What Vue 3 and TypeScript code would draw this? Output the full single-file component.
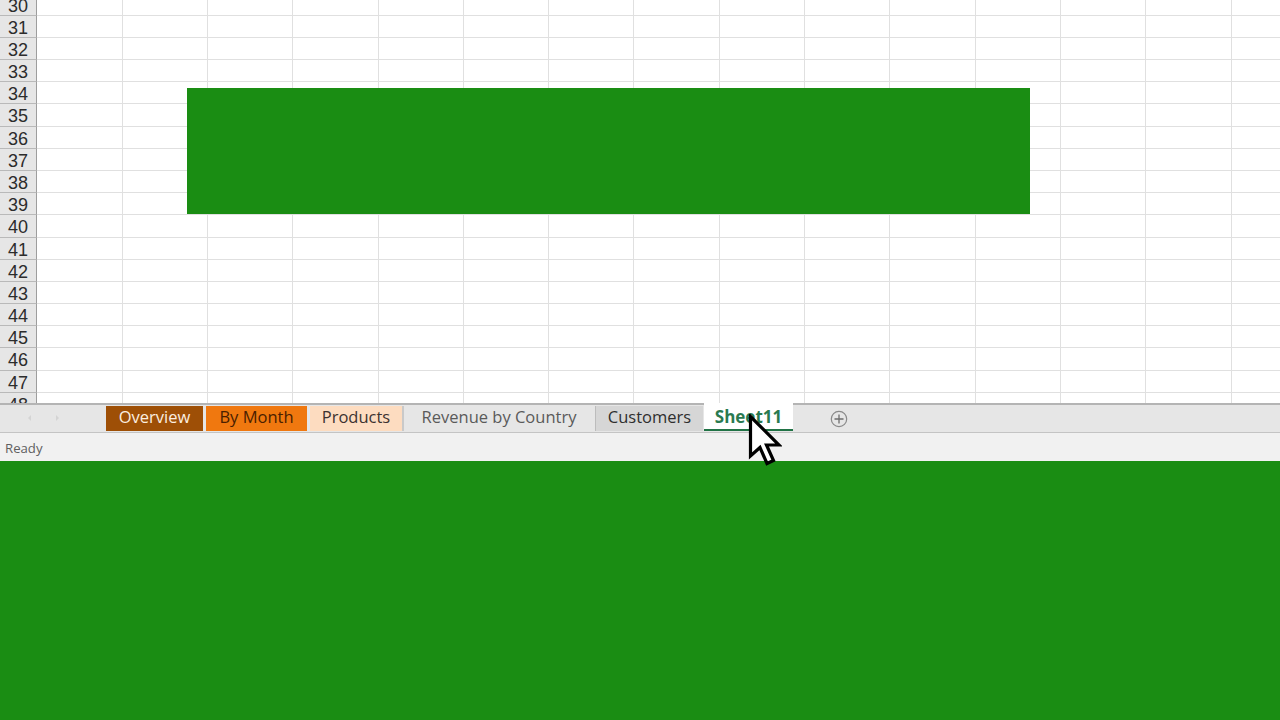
<script setup lang="ts">
const rows: number[] = Array.from({ length: 19 }, (_, i) => 30 + i)
const cols: number[] = Array.from({ length: 15 }, (_, i) => i)
interface Tab { name: string; kind: string }
const tabs: Tab[] = [
  { name: 'Overview', kind: 'brown' },
  { name: 'By Month', kind: 'orange' },
  { name: 'Products', kind: 'peach' },
  { name: 'Revenue by Country', kind: 'plain' },
  { name: 'Customers', kind: 'grey' },
  { name: 'Sheet11', kind: 'active' },
]
</script>

<template>
  <div class="page">
    <div class="sheet">
      <div class="rows">
        <div v-for="r in rows" :key="r" class="row">
          <div class="head">{{ r }}</div>
          <div v-for="c in cols" :key="c" class="cell"></div>
        </div>
      </div>
      <div class="block"></div>
    </div>
    <div class="tabbar">
      <div class="nav">
        <svg width="8" height="10" viewBox="0 0 8 10"><path d="M6 2 L3 5 L6 8Z" fill="#d4d4d4" /></svg>
        <svg width="8" height="10" viewBox="0 0 8 10"><path d="M2 2 L5 5 L2 8Z" fill="#d4d4d4" /></svg>
      </div>
      <div class="tabs">
        <div v-for="t in tabs" :key="t.name" class="tab" :class="t.kind">{{ t.name }}</div>
      </div>
      <svg class="plus" width="18" height="18" viewBox="0 0 18 18">
        <circle cx="9" cy="9" r="7.7" fill="none" stroke="#8a8a8a" stroke-width="1.2" />
        <path d="M9 4.5V13.5M4.5 9H13.5" stroke="#6e6e6e" stroke-width="1.3" />
      </svg>
    </div>
    <div class="status">Ready</div>
    <div class="footer"></div>
    <svg class="cursor" width="34" height="52" viewBox="0 0 34 52">
      <path d="M2.5 2.5 L2.5 42 L12 33.5 L19 49.5 L25.5 46.5 L18.5 31 L31 31 Z" fill="#fff" stroke="#000" stroke-width="3.2" stroke-linejoin="miter" />
    </svg>
  </div>
</template>

<style>
html, body { margin: 0; padding: 0; background: #fff; }
</style>

<style scoped>
.page {
  position: relative;
  width: 1280px;
  height: 720px;
  overflow: hidden;
  display: flex;
  flex-direction: column;
  background: #fff;
}
.sheet {
  position: relative;
  height: 403px;
  overflow: hidden;
  flex: none;
}
.rows {
  margin-top: -6.4px;
}
.row {
  display: flex;
  height: 22.18px;
  box-sizing: border-box;
  border-bottom: 1px solid #e0e0e0;
}
.head {
  flex: none;
  width: 37.2px;
  box-sizing: border-box;
  background: #e6e6e6;
  border-right: 1.5px solid #9d9d9d;
  text-align: center;
  font: 18px/24px "Liberation Sans", Arial, sans-serif;
  color: #2c2c2c;
  margin-bottom: -1px;
  border-bottom: 1px solid #b9b9b9;
}
.cell {
  flex: none;
  width: 85.33px;
  box-sizing: border-box;
  border-right: 1px solid #e0e0e0;
}
.block {
  position: absolute;
  left: 187px;
  top: 88px;
  width: 842.5px;
  height: 126px;
  background: #1a8d13;
}
.tabbar {
  flex: none;
  height: 30px;
  box-sizing: border-box;
  background: #e6e6e6;
  border-top: 2px solid #b4b4b4;
  border-bottom: 1px solid #c4c4c4;
  display: flex;
  align-items: flex-start;
}
.nav {
  flex: none;
  width: 106px;
  box-sizing: border-box;
  padding: 8px 0 0 25px;
  display: flex;
  gap: 21px;
}
.tabs {
  display: flex;
  height: 26px;
}
.tab {
  font: 16.5px/21.5px "Open Sans", sans-serif;
  height: 25px;
  margin-top: 1px;
  box-sizing: border-box;
  white-space: nowrap;
  text-align: center;
  color: #444;
}
.brown { width: 97px; background: #9e4f06; color: #fbeee0; margin-right: 3px; }
.orange { width: 101px; background: #f0780f; color: #4a1e00; margin-right: 3px; }
.peach { width: 94px; background: #fddcc0; color: #3c3230; border-right: 2px solid #c9c9c9; }
.plain { width: 190px; color: #5a5a5a; margin-right: 1px; }
.grey { width: 108px; background: #d6d6d6; color: #2e2e2e; border-left: 1px solid #bcbcbc; }
.active {
  width: 89px;
  background: #fff;
  color: #2a7a50;
  font-weight: 700;
  font-size: 17px;
  height: 28px;
  margin-top: -2px;
  padding-top: 3px;
  border-bottom: 2px solid #217346;
  margin-left: 1px;
}
.plus { margin: 5px 0 0 37px; flex: none; }
.status {
  flex: none;
  height: 28px;
  box-sizing: border-box;
  background: #f1f1f1;
  font: 13.2px/31px "Open Sans", sans-serif;
  color: #5f5f5f;
  padding-left: 5px;
}
.footer {
  flex: 1;
  background: #1a8d13;
}
.cursor {
  position: absolute;
  left: 748px;
  top: 414px;
}
</style>
